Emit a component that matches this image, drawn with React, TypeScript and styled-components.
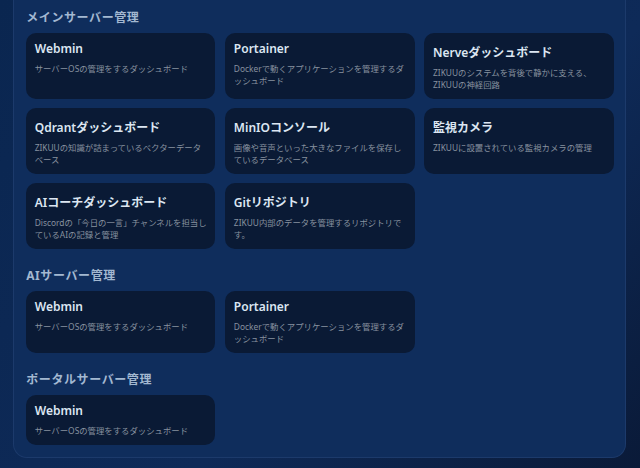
import React from "react";
import styled, { createGlobalStyle } from "styled-components";

interface Tool {
  name: string;
  desc: string;
}

interface Section {
  title: string;
  tools: Tool[];
}

const webmin: Tool = { name: "Webmin", desc: "サーバーOSの管理をするダッシュボード" };
const portainer: Tool = {
  name: "Portainer",
  desc: "Dockerで動くアプリケーションを管理するダッシュボード",
};

const sections: Section[] = [
  {
    title: "メインサーバー管理",
    tools: [
      webmin,
      portainer,
      { name: "Nerveダッシュボード", desc: "ZIKUUのシステムを背後で静かに支える、ZIKUUの神経回路" },
      { name: "Qdrantダッシュボード", desc: "ZIKUUの知識が詰まっているベクターデータベース" },
      { name: "MinIOコンソール", desc: "画像や音声といった大きなファイルを保存しているデータベース" },
      { name: "監視カメラ", desc: "ZIKUUに設置されている監視カメラの管理" },
      { name: "AIコーチダッシュボード", desc: "Discordの「今日の一言」チャンネルを担当しているAIの記録と管理" },
      { name: "Gitリポジトリ", desc: "ZIKUU内部のデータを管理するリポジトリです。" },
    ],
  },
  { title: "AIサーバー管理", tools: [webmin, portainer] },
  { title: "ポータルサーバー管理", tools: [webmin] },
];

const GlobalStyle = createGlobalStyle`
  html, body {
    margin: 0;
    height: 468px;
    overflow: hidden;
    background: linear-gradient(135deg, #0a2650 0%, #0e2a58 60%, #0a1a38 100%);
    font-family: "Noto Sans", "Noto Sans CJK JP", sans-serif;
  }
`;

const Panel = styled.main`
  box-sizing: border-box;
  height: 458px;
  margin: 0 14px 0 13px;
  padding: 8.7px 11.3px 0 11.7px;
  display: flex;
  flex-direction: column;
  gap: 18.3px;
  background: #0f2d5c;
  border: 1px solid #1c3a6b;
  border-top: none;
  border-radius: 0 0 14px 14px;
`;

const Group = styled.section`
  display: flex;
  flex-direction: column;
  gap: 7px;
`;

const Heading = styled.h2`
  margin: 0 0 0 0.5px;
  font-size: 12px;
  letter-spacing: 0.6px;
  line-height: 17px;
  font-weight: 700;
  color: #a3b8d1;
`;

const Grid = styled.div`
  display: grid;
  grid-template-columns: repeat(3, 1fr);
  gap: 9px 9.5px;
`;

const Card = styled.a`
  box-sizing: border-box;
  padding: 7px 7px 8px 9px;
  display: flex;
  flex-direction: column;
  gap: 6px;
  background: #0a1a35;
  border-radius: 10px;
`;

const Name = styled.h3<{ $tall: boolean }>`
  margin: 0;
  padding-top: ${(p) => (p.$tall ? "4px" : "1px")};
  font-size: 12px;
  line-height: ${(p) => (p.$tall ? "17px" : "16px")};
  font-weight: 600;
  color: #dce6f2;
`;

const Desc = styled.p`
  margin: 0;
  font-size: 8.4px;
  line-height: 12px;
  color: #87919f;
`;

// 日本語を含むタイトルだけ行が高くなる
const hasJapanese = (text: string) => /[^\x00-\x7f]/.test(text);

export default function App() {
  return (
    <>
      <GlobalStyle />
      <Panel>
        {sections.map((section) => (
          <Group key={section.title}>
            <Heading>{section.title}</Heading>
            <Grid>
              {section.tools.map((tool) => (
                <Card key={tool.name}>
                  <Name $tall={hasJapanese(tool.name)}>{tool.name}</Name>
                  <Desc>{tool.desc}</Desc>
                </Card>
              ))}
            </Grid>
          </Group>
        ))}
      </Panel>
    </>
  );
}
